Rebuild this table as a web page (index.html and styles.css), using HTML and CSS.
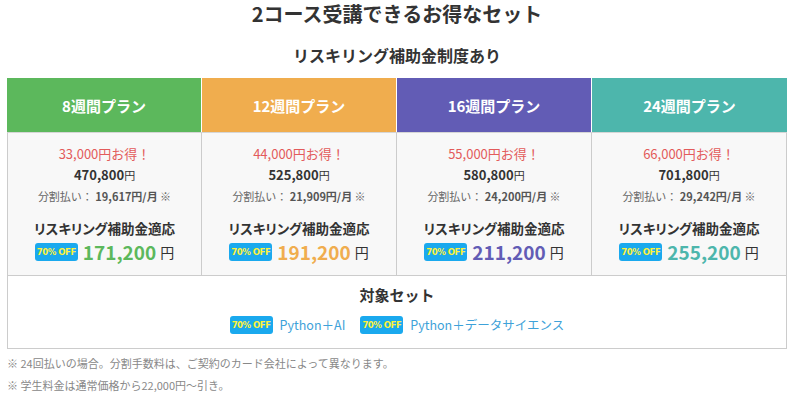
FILE: index.html
```html
<!DOCTYPE html>
<html lang="ja">
<head>
<meta charset="utf-8">
<link rel="stylesheet" href="styles.css">
</head>
<body>
<div class="page">
  <h2 class="title">2コース受講できるお得なセット</h2>
  <h3 class="subtitle">リスキリング補助金制度あり</h3>
  <div class="plans">
    <div class="plan plan-green">
      <div class="plan-head">8週間プラン</div>
      <div class="plan-body">
        <p class="save">33,000円お得！</p>
        <p class="regular">470,800<span class="yen">円</span></p>
        <p class="split">分割払い： <b>19,617円/月</b> ※</p>
        <p class="subsidy">リスキリング補助金適応</p>
        <p class="price"><span class="badge">70% OFF</span><span class="num">171,200</span><span class="unit">円</span></p>
      </div>
    </div>
    <div class="plan plan-orange">
      <div class="plan-head">12週間プラン</div>
      <div class="plan-body">
        <p class="save">44,000円お得！</p>
        <p class="regular">525,800<span class="yen">円</span></p>
        <p class="split">分割払い： <b>21,909円/月</b> ※</p>
        <p class="subsidy">リスキリング補助金適応</p>
        <p class="price"><span class="badge">70% OFF</span><span class="num">191,200</span><span class="unit">円</span></p>
      </div>
    </div>
    <div class="plan plan-purple">
      <div class="plan-head">16週間プラン</div>
      <div class="plan-body">
        <p class="save">55,000円お得！</p>
        <p class="regular">580,800<span class="yen">円</span></p>
        <p class="split">分割払い： <b>24,200円/月</b> ※</p>
        <p class="subsidy">リスキリング補助金適応</p>
        <p class="price"><span class="badge">70% OFF</span><span class="num">211,200</span><span class="unit">円</span></p>
      </div>
    </div>
    <div class="plan plan-teal">
      <div class="plan-head">24週間プラン</div>
      <div class="plan-body">
        <p class="save">66,000円お得！</p>
        <p class="regular">701,800<span class="yen">円</span></p>
        <p class="split">分割払い： <b>29,242円/月</b> ※</p>
        <p class="subsidy">リスキリング補助金適応</p>
        <p class="price"><span class="badge">70% OFF</span><span class="num">255,200</span><span class="unit">円</span></p>
      </div>
    </div>
  </div>
  <div class="sets">
    <p class="sets-title">対象セット</p>
    <div class="sets-list">
      <span class="set"><span class="badge">70% OFF</span>Python＋AI</span>
      <span class="set"><span class="badge">70% OFF</span>Python＋データサイエンス</span>
    </div>
  </div>
  <p class="note">※ 24回払いの場合。分割手数料は、ご契約のカード会社によって異なります。</p>
  <p class="note">※ 学生料金は通常価格から22,000円〜引き。</p>
</div>
</body>
</html>
```

FILE: styles.css
```css
* { box-sizing: border-box; }
html, body { margin: 0; padding: 0; background: #fff; }
body {
  font-family: "Noto Sans CJK JP", "Noto Sans", sans-serif;
  color: #333;
}
p { margin: 0; }
.page {
  padding: 0 8px 0 7px;
}
.title {
  margin: 0;
  font-size: 20px;
  font-weight: 700;
  line-height: 27px;
  text-align: center;
  color: #333;
}
.subtitle {
  margin: 16px 0 0;
  font-size: 16px;
  font-weight: 700;
  line-height: 24px;
  text-align: center;
  color: #333;
}
.plans {
  margin-top: 11px;
  display: grid;
  grid-template-columns: repeat(4, 1fr);
}
.plan { display: flex; flex-direction: column; }
.plan-head {
  height: 54px;
  display: flex;
  align-items: center;
  justify-content: center;
  color: #fff;
  font-size: 15px;
  font-weight: 700;
  border-right: 1px solid #fff;
}
.plan:last-child .plan-head { border-right: none; }
.plan-green .plan-head { background: #5cb85c; }
.plan-orange .plan-head { background: #f0ad4e; }
.plan-purple .plan-head { background: #625cb5; }
.plan-teal .plan-head { background: #4db6ac; }
.plan-green .num { color: #5cb85c; }
.plan-orange .num { color: #f0ad4e; }
.plan-purple .num { color: #625cb5; }
.plan-teal .num { color: #4db6ac; }
.plan-body {
  height: 143px;
  background: #f8f8f8;
  border-top: 1px solid #d6d6d6;
  border-right: 1px solid #ccc;
  text-align: center;
  padding-top: 10px;
}
.plan:first-child .plan-body { border-left: 1px solid #ccc; }
.save {
  color: #e35b5b;
  font-size: 13px;
  line-height: 21px;
}
.regular {
  font-size: 13px;
  font-weight: 700;
  line-height: 21px;
  color: #333;
}
.yen { font-size: 11px; font-weight: 400; }
.split {
  font-size: 11px;
  line-height: 21px;
  color: #666;
}
.split b { color: #555; }
.subsidy {
  margin-top: 11px;
  font-size: 13.5px;
  font-weight: 700;
  line-height: 20px;
  color: #333;
  font-feature-settings: "palt";
}
.price {
  margin-top: 0;
  display: flex;
  align-items: center;
  justify-content: center;
  line-height: 28px;
}
.badge {
  display: inline-flex;
  align-items: center;
  justify-content: center;
  flex: none;
  width: 43px;
  height: 18px;
  border-radius: 3px;
  background: #1aa9ee;
  color: #fff23a;
  font-family: "DejaVu Sans Condensed", "Roboto", sans-serif;
  font-stretch: condensed;
  font-size: 9.5px;
  font-weight: 700;
  line-height: 18px;
  white-space: nowrap;
  letter-spacing: -0.5px;
}
.num {
  margin-left: 5px;
  font-size: 19px;
  font-weight: 700;
}
.unit {
  margin-left: 4px;
  font-size: 14px;
  color: #333;
}
.sets {
  height: 74px;
  border: 1px solid #ccc;
  background: #fff;
  text-align: center;
  padding-top: 8px;
}
.sets-title {
  font-size: 15px;
  font-weight: 700;
  line-height: 22px;
  color: #333;
}
.sets-list {
  margin-top: 9px;
  display: flex;
  justify-content: center;
  gap: 15px;
}
.set {
  display: inline-flex;
  align-items: center;
  gap: 7px;
  color: #3ea2d9;
  font-size: 12.5px;
  line-height: 20px;
}
.note {
  font-size: 11px;
  color: #888;
  line-height: 22px;
}
.sets + .note { margin-top: 3px; }
```
